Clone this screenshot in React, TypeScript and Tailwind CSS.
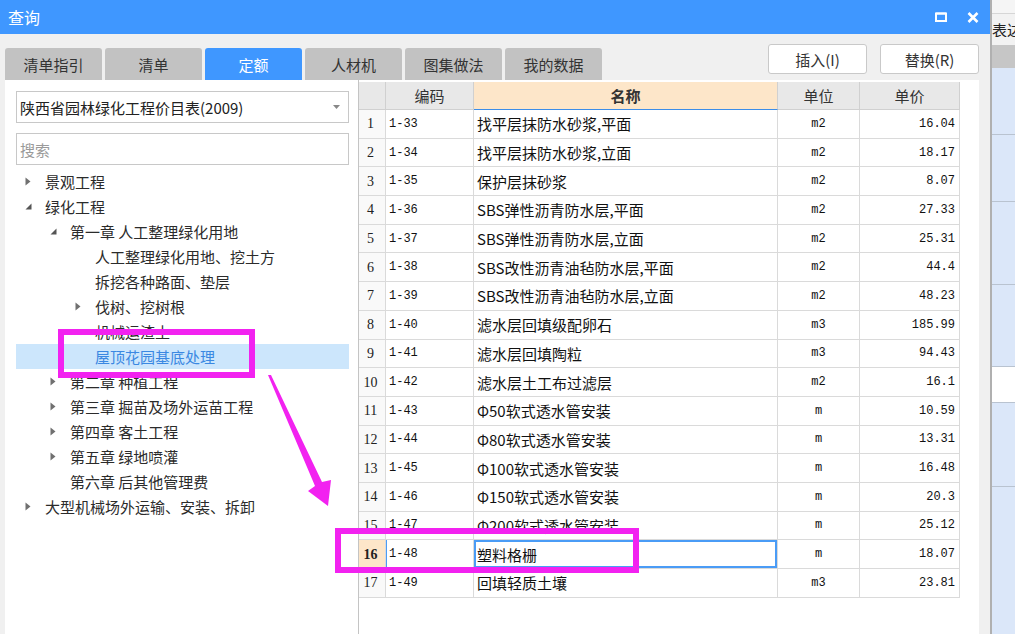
import React from "react"

type TreeNode = { label: string; level: number; arrow?: "open" | "closed"; selected?: boolean }

const tree: TreeNode[] = [
  { label: "景观工程", level: 0, arrow: "closed" },
  { label: "绿化工程", level: 0, arrow: "open" },
  { label: "第一章 人工整理绿化用地", level: 1, arrow: "open" },
  { label: "人工整理绿化用地、挖土方", level: 2 },
  { label: "拆挖各种路面、垫层", level: 2 },
  { label: "伐树、挖树根", level: 2, arrow: "closed" },
  { label: "机械运渣土", level: 2 },
  { label: "屋顶花园基底处理", level: 2, selected: true },
  { label: "第二章 种植工程", level: 1, arrow: "closed" },
  { label: "第三章 掘苗及场外运苗工程", level: 1, arrow: "closed" },
  { label: "第四章 客土工程", level: 1, arrow: "closed" },
  { label: "第五章 绿地喷灌", level: 1, arrow: "closed" },
  { label: "第六章 后其他管理费", level: 1 },
  { label: "大型机械场外运输、安装、拆卸", level: 0, arrow: "closed" },
]

const rows: [string, string, string, string][] = [
  ["1-33", "找平层抹防水砂浆,平面", "m2", "16.04"],
  ["1-34", "找平层抹防水砂浆,立面", "m2", "18.17"],
  ["1-35", "保护层抹砂浆", "m2", "8.07"],
  ["1-36", "SBS弹性沥青防水层,平面", "m2", "27.33"],
  ["1-37", "SBS弹性沥青防水层,立面", "m2", "25.31"],
  ["1-38", "SBS改性沥青油毡防水层,平面", "m2", "44.4"],
  ["1-39", "SBS改性沥青油毡防水层,立面", "m2", "48.23"],
  ["1-40", "滤水层回填级配卵石", "m3", "185.99"],
  ["1-41", "滤水层回填陶粒", "m3", "94.43"],
  ["1-42", "滤水层土工布过滤层", "m2", "16.1"],
  ["1-43", "Φ50软式透水管安装", "m", "10.59"],
  ["1-44", "Φ80软式透水管安装", "m", "13.31"],
  ["1-45", "Φ100软式透水管安装", "m", "16.48"],
  ["1-46", "Φ150软式透水管安装", "m", "20.3"],
  ["1-47", "Φ200软式透水管安装", "m", "25.12"],
  ["1-48", "塑料格栅", "m", "18.07"],
  ["1-49", "回填轻质土壤", "m3", "23.81"],
]

const tabs = ["清单指引", "清单", "定额", "人材机", "图集做法", "我的数据"]

function Arrow({ kind }: { kind?: "open" | "closed" }) {
  if (kind === "closed")
    return (
      <svg width="6" height="9" viewBox="0 0 6 9">
        <path d="M0.5 0.5 L5.5 4.5 L0.5 8.5 Z" fill="#707070" />
      </svg>
    )
  if (kind === "open")
    return (
      <svg width="7" height="7" viewBox="0 0 7 7">
        <path d="M6.5 0.5 L6.5 6.5 L0.5 6.5 Z" fill="#555" />
      </svg>
    )
  return null
}

export default function App() {
  const cell = "border-r border-b border-[#dadada] flex items-center h-[28.7px]"
  const mono = "font-['Liberation_Mono','Noto_Sans_CJK_SC',monospace] text-[12px] text-[#111]"

  return (
    <div className="w-[1015px] h-[634px] flex overflow-hidden relative font-['Noto_Sans_CJK_SC',sans-serif] text-[#2b2b2b]">
      <div className="w-[990px] h-full flex flex-col bg-[#f0f0f0]">
        {/* title */}
        <div className="h-[34px] bg-[#3f97ff] flex items-center justify-between pl-[8px] pr-[11px] text-white">
          <span className="text-[16px] leading-none">查询</span>
          <div className="flex items-center gap-[20px]">
            <svg width="12" height="10" viewBox="0 0 12 10">
              <rect x="1" y="1.5" width="10" height="7.5" fill="none" stroke="white" strokeWidth="2" />
              <rect x="1" y="0.5" width="10" height="2" fill="white" />
            </svg>
            <svg width="12" height="11" viewBox="0 0 12 11">
              <path d="M1.5 1 L10.5 10 M10.5 1 L1.5 10" stroke="white" strokeWidth="2.6" />
            </svg>
          </div>
        </div>

        {/* tabs + buttons */}
        <div className="h-[46px] flex justify-between pl-[5px] pr-[11px]">
          <div className="flex gap-[3px] self-end">
            {tabs.map(t => (
              <div
                key={t}
                className={
                  "w-[97px] h-[32px] rounded-t-[3px] flex items-center justify-center text-[15px] leading-none " +
                  (t === "定额" ? "bg-[#3f97ff] text-white" : "bg-[#c2c2c2] text-[#333]")
                }
              >
                {t}
              </div>
            ))}
          </div>
          <div className="flex gap-[13px] mt-[10px]">
            {["插入(I)", "替换(R)"].map(b => (
              <div
                key={b}
                className="w-[99px] h-[30px] bg-white border border-[#c9c9c9] rounded-[3px] flex items-center justify-center text-[15px] leading-none text-[#333]"
              >
                {b}
              </div>
            ))}
          </div>
        </div>

        {/* body */}
        <div className="flex-1 flex pl-[5px] pr-[11px]">
          {/* left panel */}
          <div className="w-[353px] bg-white pl-[11px] pr-[9px] pt-[11px] flex flex-col">
            <div className="h-[32px] border border-[#c8c8c8] flex items-center justify-between pl-[3px] pr-[8px]">
              <span className="text-[15px] leading-none text-[#222]">陕西省园林绿化工程价目表(2009)</span>
              <svg width="7" height="4" viewBox="0 0 7 4">
                <path d="M0 0 L7 0 L3.5 4 Z" fill="#888" />
              </svg>
            </div>
            <div className="h-[32px] mt-[10px] border border-[#c8c8c8] flex items-center pl-[3px]">
              <span className="text-[15px] leading-none text-[#9a9a9a]">搜索</span>
            </div>
            <div className="mt-[4px] flex flex-col">
              {tree.map(n => (
                <div
                  key={n.label}
                  className={"h-[25px] flex items-center " + (n.selected ? "bg-[#cce6fc]" : "")}
                  style={{ paddingLeft: n.level * 25 }}
                >
                  <div className="w-[29px] flex items-center pl-[9px]">
                    <Arrow kind={n.arrow} />
                  </div>
                  <span className={"text-[15px] leading-none " + (n.selected ? "text-[#3a88e2]" : "text-[#2b2b2b]")}>
                    {n.label}
                  </span>
                </div>
              ))}
            </div>
          </div>

          {/* grid */}
          <div className="flex-1 bg-white border-l border-[#c4c4c4] pt-[2px]">
            <div className="grid grid-cols-[27px_88px_304px_82px_100px] w-[601px]">
              <div className="h-[28px] bg-[#e8e8e8] border-r border-b border-[#d0d0d0]" />
              <div className="h-[28px] bg-[#e8e8e8] border-r border-b border-[#d0d0d0] flex items-center justify-center text-[15px] leading-none text-[#333]">编码</div>
              <div className="h-[28px] bg-[#fde6c9] border-r border-[#d0d0d0] border-b border-b-[#3c8de8] flex items-center justify-center text-[15px] leading-none font-bold text-[#333]">名称</div>
              <div className="h-[28px] bg-[#e8e8e8] border-r border-b border-[#d0d0d0] flex items-center justify-center text-[15px] leading-none text-[#333]">单位</div>
              <div className="h-[28px] bg-[#e8e8e8] border-r border-b border-[#d0d0d0] flex items-center justify-center text-[15px] leading-none text-[#333]">单价</div>

              {rows.map(([code, name, unit, price], i) => {
                const sel = i === 15
                return (
                  <React.Fragment key={code}>
                    <div
                      className={
                        cell +
                        " justify-center pr-[3px] font-['Liberation_Serif',serif] text-[14px] text-[#222] " +
                        (sel ? "bg-[#fde6c9] font-bold" : "bg-[#f9f9f9]")
                      }
                    >
                      {i + 1}
                    </div>
                    <div className={cell + " pl-[3px] " + mono + (sel ? " shadow-[inset_1px_0_0_#4a9cf6]" : "")}>{code}</div>
                    <div
                      className={
                        cell +
                        " pl-[3px] text-[15px] leading-none text-[#111]" +
                        (sel ? " shadow-[inset_0_0_0_2px_#4a9cf6]" : "")
                      }
                    >
                      {name}
                    </div>
                    <div className={cell + " justify-center " + mono}>{unit}</div>
                    <div className={cell + " justify-end pr-[4px] " + mono}>{price}</div>
                  </React.Fragment>
                )
              })}
            </div>
          </div>
        </div>
      </div>

      <div className="w-[2px] h-full bg-[#b0b0b0]" />

      {/* background application strip */}
      <div className="flex-1 flex flex-col overflow-hidden">
        <div className="h-[14px] bg-[#f5f5f5] border-b border-[#d6d6d6]" />
        <div className="h-[31px] bg-[#f2f2f2] flex items-center overflow-hidden text-[15px] leading-none text-[#222]">
          <span className="w-[23px] overflow-hidden whitespace-nowrap">表达</span>
        </div>
        <div className="h-[23px] bg-[#c6c6c6]" />
        <div className="h-[67px] bg-[#dbe7f9] border-b border-[#b9c3d0]" />
        <div className="h-[67px] bg-[#dbe7f9] border-b border-[#b9c3d0]" />
        <div className="h-[83px] bg-[#dbe7f9] border-b border-[#b9c3d0]" />
        <div className="h-[82px] bg-[#dbe7f9] border-b border-[#b9c3d0]" />
        <div className="h-[36px] bg-white border-b border-[#b9c3d0]" />
        <div className="h-[84px] bg-[#dbe7f9] border-b border-[#b9c3d0]" />
        <div className="flex-1 bg-[#dbe7f9]" />
      </div>

      {/* annotations */}
      <div className="absolute left-[58px] top-[329px] w-[197px] h-[49px] border-[6px] border-[#f222f0]" />
      <div className="absolute left-[335px] top-[528px] w-[304px] h-[45px] border-[6px] border-[#f222f0]" />
      <svg className="absolute left-0 top-0" width="1015" height="634" viewBox="0 0 1015 634">
        <polygon
          points="268,375 271,375 322,482 331,480 328,506 308,491 315,486"
          fill="#f222f0"
        />
      </svg>
    </div>
  )
}
